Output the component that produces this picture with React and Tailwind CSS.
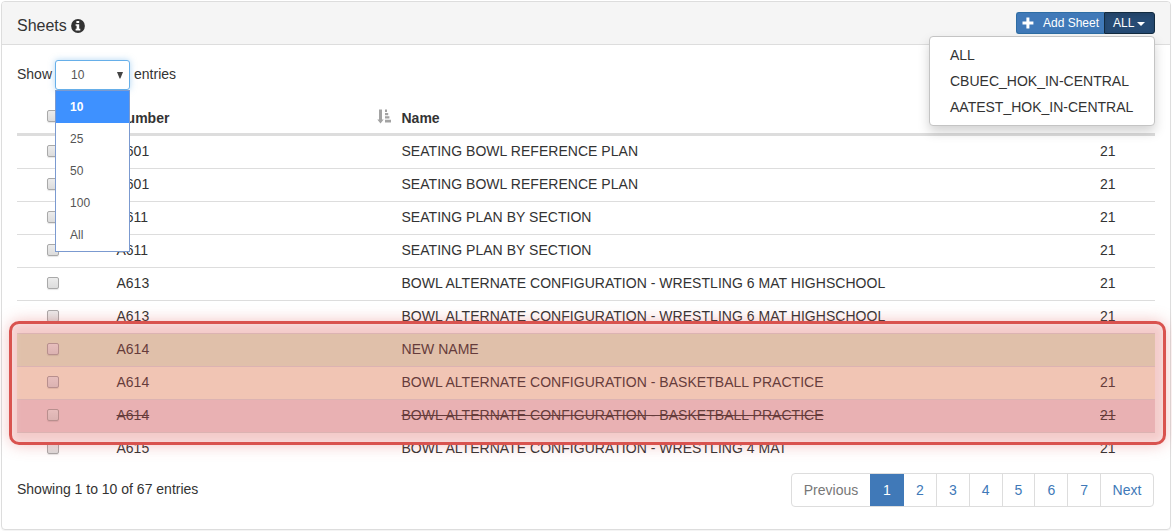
import React from "react";

const ROWS = [
  { no: "A601", name: "SEATING BOWL REFERENCE PLAN", rev: "21" },
  { no: "A601", name: "SEATING BOWL REFERENCE PLAN", rev: "21" },
  { no: "A611", name: "SEATING PLAN BY SECTION", rev: "21" },
  { no: "A611", name: "SEATING PLAN BY SECTION", rev: "21" },
  { no: "A613", name: "BOWL ALTERNATE CONFIGURATION - WRESTLING 6 MAT HIGHSCHOOL", rev: "21" },
  { no: "A613", name: "BOWL ALTERNATE CONFIGURATION - WRESTLING 6 MAT HIGHSCHOOL", rev: "21" },
  { no: "A614", name: "NEW NAME", rev: "", tone: "bg-[#e2efd2]" },
  { no: "A614", name: "BOWL ALTERNATE CONFIGURATION - BASKETBALL PRACTICE", rev: "21", tone: "bg-[#fbf7e0]" },
  { no: "A614", name: "BOWL ALTERNATE CONFIGURATION - BASKETBALL PRACTICE", rev: "21", tone: "bg-[#f0dade] line-through" },
  { no: "A615", name: "BOWL ALTERNATE CONFIGURATION - WRESTLING 4 MAT", rev: "21" },
];

function Check() {
  return (
    <span className="block h-3 w-3 rounded-[2px] border border-[#a9a9a9] bg-linear-to-b from-[#ececec] to-[#dcdcdc] shadow-[0_1px_1px_rgba(0,0,0,0.1)]" />
  );
}

function InfoIcon() {
  return (
    <svg width="14" height="14" viewBox="0 0 14 14" className="-mt-px">
      <circle cx="7" cy="7" r="6.9" fill="#333" />
      <path d="M5.4 2.1h2.8v1.8H5.4zM4.6 5.2h3.6v4.6h1.1v1.6H4.6V9.8h1V6.8h-1z" fill="#fff" />
    </svg>
  );
}

function SortIcon() {
  return (
    <svg width="15" height="15" viewBox="0 0 15 15" className="-mt-[4px]">
      <path
        d="M2 0.5h3v10h1.7L3.5 14.5.3 10.5H2zM8 0.5h2v2.6H8zM8 4h3.2v2.2H8zM8 7.2h4.4v2.4H8zM8 10.8h6v2.6H8z"
        fill="#a3a3a3"
      />
    </svg>
  );
}

function Select() {
  return (
    <div className="relative mx-[3px] h-[30px] w-[75px]">
      <div className="flex h-full items-center justify-between rounded-[3px] border border-[#66afe9] bg-white pr-[6px] pl-[15px] text-[12px] text-[#555] shadow-[0_0_6px_rgba(102,175,233,0.5)]">
        <span>10</span>
        <svg width="6" height="7" viewBox="0 0 6 7">
          <path d="M0 0h6L3.4 6.5h-.8z" fill="#444" />
        </svg>
      </div>
      <div className="absolute top-[30px] left-0 z-10 w-[75px] border border-[#7b9ad0] bg-white text-[12px] leading-8 text-[#555]">
        <div className="bg-[#3e91ff] pl-[14px] font-bold text-white">10</div>
        {["25", "50", "100", "All"].map((v) => (
          <div key={v} className="pl-[14px]">{v}</div>
        ))}
      </div>
    </div>
  );
}

function Header() {
  return (
    <header className="flex h-[43px] items-start justify-between rounded-t-[3px] border-b border-[#ddd] bg-[#f5f5f5] pr-[15px] pl-[15px]">
      <div className="flex items-center gap-[4px] pt-[13px] text-[16px] leading-[22px]">
        Sheets <InfoIcon />
      </div>
      <div className="relative flex pt-[10px] text-[12px] leading-5 text-white">
        <button className="flex h-[22px] w-[88px] items-center rounded-l-[3px] border border-r-0 border-[#2e6da4] bg-[#4079b8] pl-[5px]">
          <svg width="12" height="12" viewBox="0 0 12 12" className="mr-[9px]">
            <path d="M4.4 0.5h3v3.9h4v3h-4v4.1h-3V7.4H.5v-3h3.9z" fill="#fff" />
          </svg>
          <span className="whitespace-nowrap">Add Sheet</span>
        </button>
        <button className="flex h-[22px] w-[51px] items-center rounded-r-[3px] border border-[#122b40] bg-[#264b74] pl-[8px] shadow-[inset_0_3px_5px_rgba(0,0,0,0.125)]">
          ALL
          <svg width="8" height="4" viewBox="0 0 8 4" className="ml-[3px] mt-px">
            <path d="M0 0h8L4 4z" fill="#fff" />
          </svg>
        </button>
        <ul className="absolute top-[34px] right-0 z-10 h-[90px] w-[226px] rounded-[4px] border border-[#c4c4c4] bg-white py-[5px] pl-[20px] text-[14px] leading-[26px] text-[#333] shadow-[0_6px_12px_rgba(0,0,0,0.175)]">
          <li>ALL</li>
          <li>CBUEC_HOK_IN-CENTRAL</li>
          <li>AATEST_HOK_IN-CENTRAL</li>
        </ul>
      </div>
    </header>
  );
}

function Pager() {
  return (
    <nav className="mr-px flex h-[34px] overflow-hidden rounded-[4px] border border-[#ddd] text-[14px] leading-8 text-[#4079b8]">
      <span className="w-[78px] text-center text-[#777]">Previous</span>
      <span className="-my-px w-[34px] bg-[#4079b8] text-center leading-[34px] text-white">1</span>
      <span className="w-8 text-center">2</span>
      {["3", "4", "5", "6", "7"].map((n) => (
        <span key={n} className="w-[32.8px] border-l border-[#ddd] text-center">{n}</span>
      ))}
      <span className="w-[53px] border-l border-[#ddd] text-center">Next</span>
    </nav>
  );
}

export default function App() {
  return (
    <div className="h-[531px] w-[1172px] bg-white pt-px pl-px font-['Liberation_Sans',Arial,sans-serif] text-[14px] text-[#333]">
      <main className="relative h-[529px] w-[1170px] rounded-[4px] border border-[#ddd] shadow-[0_1px_1px_rgba(0,0,0,0.05)]">
        <Header />
        <div className="px-[15px] pt-[15px]">
          <div className="flex h-[30px] items-center">
            <span className="pb-[2px]">Show</span>
            <Select />
            <span className="pb-[2px] pl-px">entries</span>
          </div>
          <div className="mt-[12px] grid h-[34px] grid-cols-[99.5px_285px_698.5px_1fr] items-center border-b-3 border-[#ddd] font-bold">
            <div className="-mt-[3px] pl-[30px]"><Check /></div>
            <div className="flex items-center justify-between pt-[2px] pr-[10px]">
              Number <SortIcon />
            </div>
            <div className="pt-[2px]">Name</div>
          </div>
          <div className="-mt-px h-[330px]">
            {ROWS.map((r, i) => (
              <div
                key={i}
                className={`grid h-[33px] grid-cols-[99.5px_285px_698.5px_1fr] items-start border-t leading-[30px] ${i === 0 ? "border-transparent" : "border-[#ddd]"} ${r.tone || ""}`}
              >
                <div className="pt-[9px] pl-[30px]"><Check /></div>
                <div>{r.no}</div>
                <div className="tracking-[0.03px]">{r.name}</div>
                <div>{r.rev}</div>
              </div>
            ))}
          </div>
          <div className="mt-[8px] flex items-start justify-between">
            <div className="leading-8">Showing 1 to 10 of 67 entries</div>
            <Pager />
          </div>
        </div>
        <div className="absolute top-[319px] left-[7px] h-[124px] w-[1157px] rounded-[10px] border-3 border-[#d9534f] bg-[#d9534f]/30 shadow-[0_0_15px_rgba(217,83,79,0.35),inset_0_0_10px_rgba(255,255,255,0.5)]" />
      </main>
    </div>
  );
}
